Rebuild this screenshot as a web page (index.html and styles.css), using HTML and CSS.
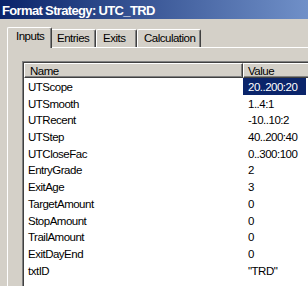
FILE: index.html
```html
<!DOCTYPE html>
<html lang="en">
<head>
    <meta charset="UTF-8">
    <title>Format Strategy: UTC_TRD</title>
    <link rel="stylesheet" href="styles.css">
</head>
<body>

    <!-- 标题栏 -->
    <div class="titlebar">Format Strategy: UTC_TRD</div>

    <!-- 选项卡 -->
    <div class="tabs">
        <div class="tab tab-inputs active">Inputs</div>
        <div class="tab tab-entries">Entries</div>
        <div class="tab tab-exits">Exits</div>
        <div class="tab tab-calc">Calculation</div>
    </div>

    <!-- 参数列表 -->
    <div class="panel">
        <div class="listview">
            <div class="listview-inner">
                <div class="lv-header">
                    <div class="col col-name">Name</div>
                    <div class="col col-value">Value</div>
                </div>
                <div class="lv-row"><div class="cell-name">UTScope</div><div class="cell-value selected">20..200:20</div></div>
                <div class="lv-row"><div class="cell-name">UTSmooth</div><div class="cell-value">1..4:1</div></div>
                <div class="lv-row"><div class="cell-name">UTRecent</div><div class="cell-value">-10..10:2</div></div>
                <div class="lv-row"><div class="cell-name">UTStep</div><div class="cell-value">40..200:40</div></div>
                <div class="lv-row"><div class="cell-name">UTCloseFac</div><div class="cell-value">0..300:100</div></div>
                <div class="lv-row"><div class="cell-name">EntryGrade</div><div class="cell-value">2</div></div>
                <div class="lv-row"><div class="cell-name">ExitAge</div><div class="cell-value">3</div></div>
                <div class="lv-row"><div class="cell-name">TargetAmount</div><div class="cell-value">0</div></div>
                <div class="lv-row"><div class="cell-name">StopAmount</div><div class="cell-value">0</div></div>
                <div class="lv-row"><div class="cell-name">TrailAmount</div><div class="cell-value">0</div></div>
                <div class="lv-row"><div class="cell-name">ExitDayEnd</div><div class="cell-value">0</div></div>
                <div class="lv-row"><div class="cell-name">txtID</div><div class="cell-value">"TRD"</div></div>
            </div>
        </div>
    </div>

</body>
</html>
```

FILE: styles.css
```css
/* 重置默认样式 */
* {
    margin: 0;
    padding: 0;
    box-sizing: border-box;
}

body {
    width: 308px;
    height: 286px;
    overflow: hidden;
    background: #d4d0c8;
    font-family: 'Liberation Sans', Arial, sans-serif;
    font-size: 11.5px;
    letter-spacing: -0.5px;
    color: #000;
}

/* 标题栏 */
.titlebar {
    height: 19px;
    padding: 2px 0 0 2px;
    line-height: 17px;
    font-size: 13px;
    font-weight: bold;
    letter-spacing: -0.65px;
    color: #fff;
    white-space: nowrap;
    background: linear-gradient(to right, #0a246a, #7090c8);
}

/* 选项卡 */
.tabs {
    height: 28px;
    display: flex;
    align-items: flex-end;
    padding-left: 9px;
}

.tab {
    position: relative;
    height: 18px;
    padding: 2px 0 0 6px;
    line-height: 13px;
    white-space: nowrap;
    border-top: 1px solid #fff;
    border-left: 1px solid #fff;
    border-right: 1px solid #404040;
    border-radius: 2px 2px 0 0;
    box-shadow: inset -1px 0 #808080;
}

.tab-inputs { width: 41px; }
.tab-entries { width: 46px; }
.tab-exits { width: 41px; }
.tab-calc { width: 64px; }

.tab.active {
    z-index: 1;
    height: 21px;
    width: 45px;
    margin: 0 -2px -1px -2px;
    padding-left: 8px;
    background: #d4d0c8;
}

.panel {
    margin-left: 7px;
    padding: 13px 0 0 14px;
    height: 239px;
    border-top: 1px solid #fff;
    border-left: 1px solid #fff;
}

/* 列表视图 */
.listview {
    width: 300px;
    height: 240px;
    border-top: 1px solid #808080;
    border-left: 1px solid #808080;
}

.listview-inner {
    height: 100%;
    background: #fff;
    border-top: 1px solid #404040;
    border-left: 1px solid #404040;
}

.lv-header {
    display: flex;
    height: 15px;
}

.col {
    height: 15px;
    padding-top: 1px;
    line-height: 12px;
    background: #d4d0c8;
    border-top: 1px solid #fff;
    border-left: 1px solid #fff;
    border-bottom: 1px solid #404040;
    border-right: 1px solid #404040;
    box-shadow: inset -1px -1px #808080;
}

.col-name {
    width: 219px;
    padding-left: 5px;
}

.col-value {
    flex: 1;
    padding-left: 4px;
}

.lv-row {
    display: flex;
    height: 16.7px;
}

.cell-name,
.cell-value {
    padding-top: 3px;
    line-height: 13.7px;
    white-space: nowrap;
}

.cell-name {
    width: 219px;
    padding-left: 4px;
}

.cell-value {
    width: 63px;
    padding-left: 5px;
}

.cell-value.selected {
    background: #0a246a;
    color: #fff;
}
```
